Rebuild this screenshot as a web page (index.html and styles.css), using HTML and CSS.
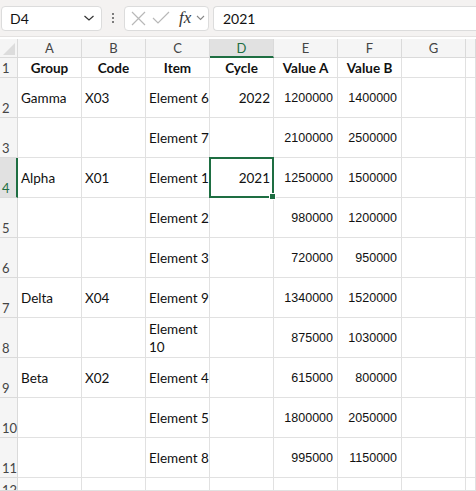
FILE: index.html
```html
<!DOCTYPE html>
<html lang="en">
<head>
    <meta charset="UTF-8">
    <title>Sheet</title>
    <link rel="stylesheet" href="styles.css">
</head>
<body>
    <div class="fbar">
        <div class="namebox">
            <span>D4</span>
            <svg class="chev" width="12" height="8" viewBox="0 0 12 8"><path d="M1.5 2 L6 6 L10.5 2" fill="none" stroke="#333" stroke-width="1.2"/></svg>
        </div>
        <div class="dots"><i></i><i></i><i></i></div>
        <div class="fnbox">
            <svg width="17" height="17" viewBox="0 0 17 17"><path d="M2 2 L15 15 M15 2 L2 15" stroke="#b8b8b8" stroke-width="1.2"/></svg>
            <svg width="18" height="16" viewBox="0 0 18 16"><path d="M1 8 L6 13 L17 2" fill="none" stroke="#b8b8b8" stroke-width="1.2"/></svg>
            <span class="fx">fx</span>
            <svg width="9" height="8" viewBox="0 0 9 8"><path d="M1 2 L4.5 5.5 L8 2" fill="none" stroke="#888" stroke-width="1.1"/></svg>
        </div>
        <div class="formula">2021</div>
    </div>

    <div class="sheet">
        <div class="corner"><span></span></div>
        <div class="ch">A</div>
        <div class="ch">B</div>
        <div class="ch">C</div>
        <div class="ch sel">D</div>
        <div class="ch">E</div>
        <div class="ch">F</div>
        <div class="ch">G</div>
        <div class="ch"></div>

        <div class="rh">1</div>
        <div class="c hd">Group</div><div class="c hd">Code</div><div class="c hd">Item</div><div class="c hd">Cycle</div>
        <div class="c hd">Value A</div><div class="c hd">Value B</div><div class="c"></div><div class="c"></div>

        <div class="rh">2</div>
        <div class="c">Gamma</div><div class="c">X03</div><div class="c">Element 6</div><div class="c num">2022</div>
        <div class="c n">1200000</div><div class="c n">1400000</div><div class="c"></div><div class="c"></div>

        <div class="rh">3</div>
        <div class="c"></div><div class="c"></div><div class="c">Element 7</div><div class="c"></div>
        <div class="c n">2100000</div><div class="c n">2500000</div><div class="c"></div><div class="c"></div>

        <div class="rh sel">4</div>
        <div class="c">Alpha</div><div class="c">X01</div><div class="c">Element 1</div><div class="c num active">2021<span class="handle"></span></div>
        <div class="c n">1250000</div><div class="c n">1500000</div><div class="c"></div><div class="c"></div>

        <div class="rh">5</div>
        <div class="c"></div><div class="c"></div><div class="c">Element 2</div><div class="c"></div>
        <div class="c n">980000</div><div class="c n">1200000</div><div class="c"></div><div class="c"></div>

        <div class="rh">6</div>
        <div class="c"></div><div class="c"></div><div class="c">Element 3</div><div class="c"></div>
        <div class="c n">720000</div><div class="c n">950000</div><div class="c"></div><div class="c"></div>

        <div class="rh">7</div>
        <div class="c">Delta</div><div class="c">X04</div><div class="c">Element 9</div><div class="c"></div>
        <div class="c n">1340000</div><div class="c n">1520000</div><div class="c"></div><div class="c"></div>

        <div class="rh">8</div>
        <div class="c"></div><div class="c"></div><div class="c wrap">Element 10</div><div class="c"></div>
        <div class="c n">875000</div><div class="c n">1030000</div><div class="c"></div><div class="c"></div>

        <div class="rh">9</div>
        <div class="c">Beta</div><div class="c">X02</div><div class="c">Element 4</div><div class="c"></div>
        <div class="c n">615000</div><div class="c n">800000</div><div class="c"></div><div class="c"></div>

        <div class="rh">10</div>
        <div class="c"></div><div class="c"></div><div class="c">Element 5</div><div class="c"></div>
        <div class="c n">1800000</div><div class="c n">2050000</div><div class="c"></div><div class="c"></div>

        <div class="rh">11</div>
        <div class="c"></div><div class="c"></div><div class="c">Element 8</div><div class="c"></div>
        <div class="c n">995000</div><div class="c n">1150000</div><div class="c"></div><div class="c"></div>

        <div class="rh last">12</div>
        <div class="c"></div><div class="c"></div><div class="c"></div><div class="c"></div>
        <div class="c"></div><div class="c"></div><div class="c"></div><div class="c"></div>
    </div>
</body>
</html>
```

FILE: styles.css
```css
body {
    margin: 0;
    width: 476px;
    height: 491px;
    overflow: hidden;
    background: #fff;
    font-family: Lato, "Liberation Sans", sans-serif;
    color: #111;
}

/* formula bar */
.fbar {
    height: 37px;
    background: #f4f2f1;
    border-bottom: 1px solid #e4e2e1;
    display: flex;
    align-items: center;
    padding-left: 1px;
    box-sizing: border-box;
}

.namebox {
    width: 101px;
    height: 25px;
    box-sizing: border-box;
    background: #fff;
    border: 1px solid #dcdcdc;
    border-radius: 4px;
    display: flex;
    align-items: center;
    justify-content: space-between;
    padding: 0 6px 0 8px;
    font-size: 14px;
}

.dots {
    width: 22px;
    display: flex;
    flex-direction: column;
    align-items: center;
    gap: 2px;
}

.dots i {
    width: 2px;
    height: 2px;
    background: #555;
    border-radius: 1px;
}

.fnbox {
    width: 85px;
    height: 25px;
    box-sizing: border-box;
    background: #fff;
    border: 1px solid #dcdcdc;
    border-radius: 4px;
    display: flex;
    align-items: center;
    padding-left: 5px;
    gap: 5px;
}

.fx {
    font-family: "Liberation Serif", serif;
    font-style: italic;
    font-size: 17px;
    color: #333;
    margin-left: 4px;
}

.formula {
    flex: 1;
    margin-left: 4px;
    height: 25px;
    box-sizing: border-box;
    background: #fff;
    border: 1px solid #dcdcdc;
    border-right: none;
    border-radius: 4px 0 0 4px;
    padding-left: 9px;
    display: flex;
    align-items: center;
    font-size: 14px;
}

/* grid */
.sheet {
    margin-top: 2px;
    display: grid;
    grid-template-columns: 18px repeat(7, 64px) 10px;
    grid-template-rows: 19px 20px repeat(10, 40px) 13px;
    font-size: 13.5px;
}

.corner,
.ch,
.rh {
    background: #f5f5f5;
    color: #444;
    border-right: 1px solid #dadada;
    border-bottom: 1px solid #dadada;
    box-sizing: border-box;
}

.corner {
    position: relative;
}

.corner span {
    position: absolute;
    right: 2px;
    bottom: 2px;
    border-left: 12px solid transparent;
    border-bottom: 12px solid #dcdcdc;
}

.ch {
    display: flex;
    align-items: center;
    justify-content: center;
    font-size: 13px;
}

.ch.sel {
    background: #e1e1e1;
    color: #1e6e42;
    border-bottom: 2px solid #1e6e42;
}

.rh {
    display: flex;
    align-items: flex-end;
    padding: 0 0 1px 2px;
    font-size: 13px;
}

.rh.last {
    align-items: flex-start;
    padding-top: 4px;
    overflow: hidden;
}

.rh.sel {
    background: #e1e1e1;
    color: #1e6e42;
    border-right: 2px solid #1e6e42;
}

.c {
    border-right: 1px solid #e1e1e1;
    border-bottom: 1px solid #e1e1e1;
    box-sizing: border-box;
    display: flex;
    align-items: center;
    padding: 0 3px;
    white-space: nowrap;
    overflow: hidden;
}

.c.hd {
    justify-content: center;
    font-weight: bold;
}

.c.num {
    justify-content: flex-end;
}

.c.n {
    justify-content: flex-end;
    font-family: "Liberation Sans", sans-serif;
    font-size: 12.5px;
    padding-right: 4px;
}

.c.wrap {
    white-space: normal;
    line-height: 18px;
}

.c.active {
    position: relative;
    overflow: visible;
    border: 2px solid #1e6e42;
    margin: -1px 0 0 -1px;
    padding-right: 2px;
}

.handle {
    position: absolute;
    right: -4px;
    bottom: -4px;
    width: 5px;
    height: 5px;
    background: #1e6e42;
    border: 1px solid #fff;
}
```
